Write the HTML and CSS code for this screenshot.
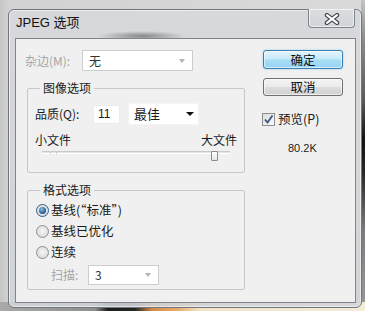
FILE: index.html
```html
<!DOCTYPE html>
<html>
<head>
<meta charset="utf-8">
<title>JPEG 选项</title>
<link rel="stylesheet" href="styles.css">
</head>
<body>
<div class="desk">
  <div class="win">
    <div class="titlebar">
      <span class="title">JPEG 选项</span>
      <div class="close">
        <svg width="16" height="12" viewBox="0 0 16 12"><path d="M3 2.2 L13 9.8 M13 2.2 L3 9.8" stroke="#3b4049" stroke-width="4.4" stroke-linecap="round"/><path d="M3 2.2 L13 9.8 M13 2.2 L3 9.8" stroke="#ffffff" stroke-width="2.2" stroke-linecap="round"/></svg>
      </div>
    </div>
    <div class="client">
      <div class="leftcol">
        <div class="row matte">
          <span class="lbl dis w57">杂边(M):</span>
          <div class="sel sel-dis w111"><span>无</span><i class="arrow arrow-dis"></i></div>
        </div>
        <fieldset class="grp g1">
          <legend>图像选项</legend>
          <div class="row quality">
            <span class="lbl w58">品质(Q):</span>
            <div class="field">11</div>
            <div class="sel sel-q"><span>最佳</span><i class="arrow"></i></div>
          </div>
          <div class="sizes"><span>小文件</span><span>大文件</span></div>
          <div class="slider">
            <div class="track"><i class="tick"></i><i class="tick t2"></i></div>
            <div class="thumb"></div>
          </div>
        </fieldset>
        <fieldset class="grp g2">
          <legend>格式选项</legend>
          <div class="radios">
            <div class="radio-row"><span class="radio on"></span><span>基线(“标准”)</span></div>
            <div class="radio-row"><span class="radio"></span><span>基线已优化</span></div>
            <div class="radio-row"><span class="radio"></span><span>连续</span></div>
          </div>
          <div class="row scan">
            <span class="lbl dis w37">扫描:</span>
            <div class="sel sel-dis w71"><span>3</span><i class="arrow arrow-dis"></i></div>
          </div>
        </fieldset>
      </div>
      <div class="rightcol">
        <div class="btn btn-ok">确定</div>
        <div class="btn btn-cancel">取消</div>
        <div class="check-row">
          <span class="checkbox"><svg width="11" height="11" viewBox="0 0 11 11"><path d="M2 5.5 L4.5 8.5 L9.5 1.5" fill="none" stroke="#3d5482" stroke-width="1.8"/></svg></span>
          <span>预览(P)</span>
        </div>
        <div class="size-val">80.2K</div>
      </div>
    </div>
  </div>
</div>
</body>
</html>
```

FILE: styles.css
```css
html, body {
  margin: 0;
  padding: 0;
}
body {
  font-family: "Noto Sans CJK SC", "Noto Sans", sans-serif;
  font-size: 12px;
  color: #1a1a1a;
}
.desk {
  width: 365px;
  height: 311px;
  overflow: hidden;
  box-sizing: border-box;
  padding: 9px 0 0 8px;
  background:
    linear-gradient(to right, #a9a9a9 0, #8e8e8e 95px, #1c1c1c 108px, #262626 135px, #d48a48 152px, #e7ad6c 178px, #efe4c8 200px, #f3ecd9 100%) left bottom / 100% 9px no-repeat,
    linear-gradient(to bottom, #c4c4c4 0, #8a8a8a 40px, #5a5a5a 100px, #121212 140px, #2a2a2a 175px, #7b7b7b 230px, #9a9a9a 100%) right top / 4px 100% no-repeat,
    linear-gradient(to right, #c5c5c5 0, #d2d2d2 8px, #dadada 100%);
}
.win {
  width: 354px;
  height: 299px;
  box-sizing: border-box;
  border: 1px solid #72767c;
  border-radius: 6px;
  padding: 0 5px 4px 6px;
  background:
    radial-gradient(ellipse 44px 5px at 133px 26px, rgba(70,70,70,0.55), rgba(70,70,70,0)),
    linear-gradient(to bottom, rgba(214,216,220,0.97), rgba(208,211,215,0.9));
  box-shadow: inset 0 0 0 1px rgba(255,255,255,0.55);
}
.titlebar {
  height: 28px;
  display: flex;
  justify-content: space-between;
  align-items: flex-start;
}
.title {
  font-family: "Liberation Sans", "Noto Sans CJK SC", sans-serif;
  font-size: 13px;
  line-height: 16px;
  padding: 5px 0 0 1px;
  color: #111;
}
.close {
  width: 47px;
  height: 19px;
  box-sizing: border-box;
  margin: -1px 1px 0 0;
  border: 1px solid #80858c;
  border-top: none;
  border-radius: 0 0 4px 4px;
  background: linear-gradient(to bottom, #dcdee1, #d0d3d7);
  box-shadow: inset 0 0 0 1px rgba(255,255,255,0.6);
  display: flex;
  align-items: center;
  justify-content: center;
  padding-top: 1px;
}
.client {
  height: 265px;
  box-sizing: border-box;
  border: 1px solid #80848a;
  background: #f0f0f0;
  display: flex;
  gap: 17px;
  padding: 11px 0 0 9px;
}
.leftcol {
  width: 220px;
  display: flex;
  flex-direction: column;
}
.row {
  display: flex;
  align-items: center;
}
.matte {
  height: 21px;
}
.lbl {
  line-height: 14px;
  white-space: nowrap;
}
.dis {
  color: #a5a5a5;
}
.w57 { width: 57px; }
.w58 { width: 58px; }
.w37 { width: 37px; }
.sel {
  position: relative;
  box-sizing: border-box;
  background: #fff;
  display: flex;
  align-items: center;
  padding-left: 6px;
  line-height: 14px;
}
.sel-dis {
  border: 1px solid #cdcdcd;
  height: 21px;
  color: #333;
}
.w111 { width: 111px; }
.w71 { width: 71px; height: 20px; }
.arrow {
  position: absolute;
  right: 7px;
  top: 50%;
  margin-top: -2px;
  width: 0;
  height: 0;
  border-left: 4px solid transparent;
  border-right: 4px solid transparent;
  border-top: 4px solid #111;
}
.arrow-dis {
  border-top-color: #b3b3b3;
  border-left-width: 3.5px;
  border-right-width: 3.5px;
}
.grp {
  box-sizing: border-box;
  width: 218px;
  margin: 10px 0 0 2px;
  padding: 0 7px;
  border: 1px solid #c4c7cb;
  border-radius: 2px;
  min-inline-size: 0;
}
.grp legend {
  margin-left: 5px;
  padding: 0 3px;
  line-height: 14px;
  font-size: 12px;
}
.g1 { padding-bottom: 10px; }
.g2 { padding-bottom: 4px; }
.quality {
  margin-top: 8px;
  height: 22px;
}
.field {
  width: 27px;
  height: 19px;
  box-sizing: border-box;
  background: #fff;
  border: 1px solid #ececec;
  line-height: 17px;
  padding-left: 4px;
  font-family: "Liberation Sans", sans-serif;
  font-size: 12px;
}
.sel-q {
  width: 71px;
  height: 22px;
  margin-left: 8px;
  border: 1px solid #f4f4f4;
  padding-left: 5px;
  font-size: 13px;
}
.sel-q .arrow {
  right: 4px;
}
.sizes {
  margin-top: 8px;
  display: flex;
  justify-content: space-between;
  line-height: 14px;
}
.slider {
  position: relative;
  height: 11px;
  margin-top: 1px;
}
.track {
  position: relative;
  margin: 4px 7px 0;
  height: 3px;
  box-sizing: border-box;
  border-top: 1px solid #c9c9c9;
  border-bottom: 1px solid #ffffff;
  background: #e4e4e4;
}
.tick {
  position: absolute;
  left: 8px;
  top: -1px;
  width: 1px;
  height: 3px;
  background: #d0d0d0;
}
.tick.t2 { left: 14px; }
.thumb {
  position: absolute;
  left: 176px;
  top: 0;
  width: 7px;
  height: 10px;
  box-sizing: border-box;
  border: 1px solid #8b8b8b;
  border-radius: 1px;
  background: linear-gradient(to bottom, #ffffff, #e6e6e6);
}
.radios {
  margin-top: 3px;
  display: flex;
  flex-direction: column;
  gap: 1px;
}
.radio-row {
  height: 20px;
  display: flex;
  align-items: center;
  gap: 2px;
  line-height: 14px;
  font-size: 12.5px;
}
.radio {
  width: 13px;
  height: 13px;
  margin-left: 1px;
  box-sizing: border-box;
  border-radius: 50%;
  border: 1px solid #8f9094;
  background: radial-gradient(circle at 50% 45%, #f6f6f6 0, #dcdcdc 70%, #e8e8e8 100%);
  position: relative;
}
.radio.on {
  border-color: #2c5f8c;
}
.radio.on::after {
  content: "";
  position: absolute;
  left: 2px;
  top: 2px;
  width: 7px;
  height: 7px;
  border-radius: 50%;
  background: radial-gradient(circle at 40% 35%, #8fc1e6 0, #2c6aa0 55%, #1b3e66 100%);
}
.scan {
  margin-top: 3px;
  height: 20px;
}
.scan .lbl {
  margin-left: 16px;
  width: 37px;
}
.rightcol {
  width: 82px;
  display: flex;
  flex-direction: column;
}
.btn {
  width: 80px;
  margin-left: 1px;
  box-sizing: border-box;
  border-radius: 3px;
  display: flex;
  align-items: center;
  justify-content: center;
  font-size: 12.5px;
  line-height: 14px;
  color: #111;
}
.btn-ok {
  height: 19px;
  border: 1px solid #3c7fb1;
  background: linear-gradient(to bottom, #e4f5fd 0, #c6e9fa 48%, #a8dcf6 52%, #98d4f3 100%);
  box-shadow: inset 0 0 0 1px rgba(255,255,255,0.55), 0 0 2px rgba(60,170,230,0.6);
}
.btn-cancel {
  height: 18px;
  margin-top: 9px;
  border: 1px solid #707070;
  background: linear-gradient(to bottom, #f3f3f3 0, #ebebeb 48%, #dddddd 52%, #d0d0d0 100%);
  box-shadow: inset 0 0 0 1px rgba(255,255,255,0.6);
}
.check-row {
  margin-top: 16px;
  height: 14px;
  display: flex;
  align-items: center;
  gap: 3px;
  line-height: 14px;
  font-size: 12.5px;
}
.checkbox {
  width: 13px;
  height: 13px;
  box-sizing: border-box;
  border: 1px solid #8e8f8f;
  background: linear-gradient(135deg, #dcdcdc, #fbfbfb);
  display: flex;
  align-items: center;
  justify-content: center;
}
.size-val {
  margin-top: 15px;
  padding-left: 26px;
  line-height: 14px;
  font-family: "Liberation Sans", sans-serif;
  font-size: 11px;
  color: #222;
}
```
